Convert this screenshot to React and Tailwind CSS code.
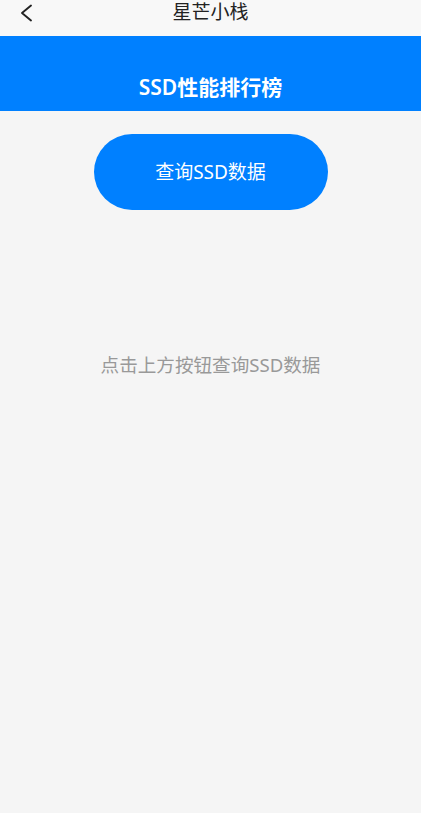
import React from 'react';

const font = { fontFamily: '"Noto Sans", "Noto Sans CJK SC", sans-serif' };

const App = () => {
  return (
    <div
      className="min-h-[813px] bg-[#f5f5f5] flex flex-col"
      style={font}
    >
      <header className="relative h-[36px] bg-[#f8f8f8] flex items-start justify-center">
        <button className="absolute left-[18px] top-[4px] w-[16px] h-[18px] flex items-center justify-center">
          <svg width="16" height="18" viewBox="0 0 16 18" fill="none">
            <path d="M13 1.5L4 9L13 16.5" stroke="#222" strokeWidth="1.9" strokeLinecap="round" strokeLinejoin="round" />
          </svg>
        </button>
        <h1 className="text-[19px] leading-[24px] text-[#222]">星芒小栈</h1>
      </header>

      <div className="bg-[#0080ff] pt-[38px] pb-[10px] text-center">
        <h2 className="text-[21px] leading-[27px] font-semibold text-white">SSD性能排行榜</h2>
      </div>

      <div className="flex flex-col items-center">
        <button className="mt-[23px] w-[234px] h-[76px] rounded-full bg-[#0080ff] text-white text-[19px]">
          查询SSD数据
        </button>
        <p className="mt-[141px] text-[18.6px] leading-[28px] text-[#999]">点击上方按钮查询SSD数据</p>
      </div>
    </div>
  );
};

export default App;
